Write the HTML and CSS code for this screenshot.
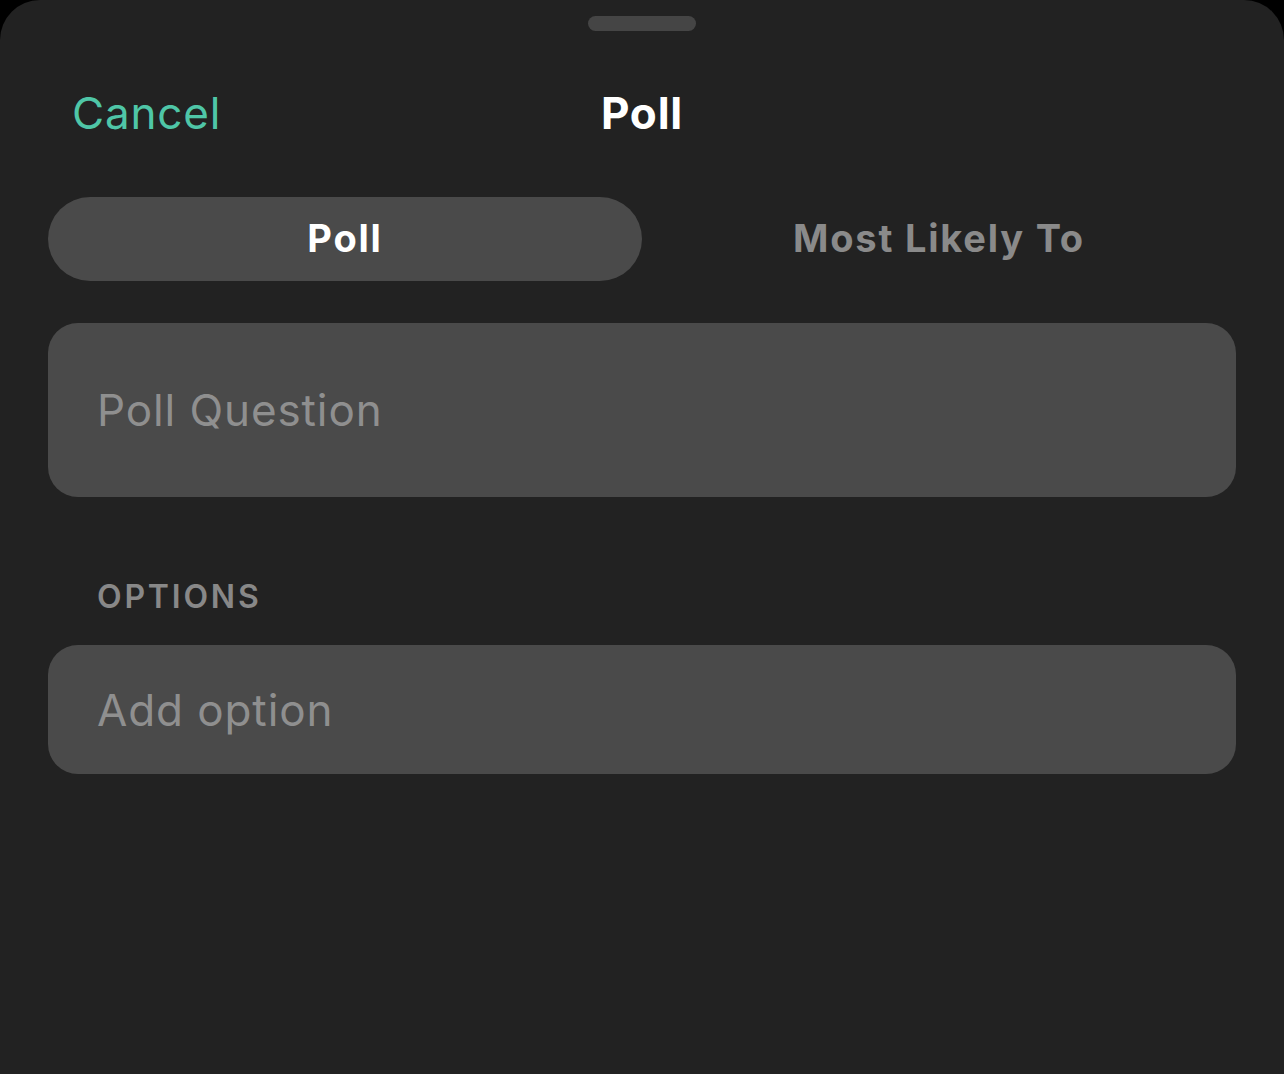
FILE: index.html
```html
<!DOCTYPE html>
<html>
<head>
<meta charset="utf-8">
<link rel="stylesheet" href="styles.css">
</head>
<body>
<div class="sheet">
  <div class="handle"></div>
  <div class="nav">
    <span class="cancel">Cancel</span>
    <span class="title">Poll</span>
  </div>
  <div class="segmented">
    <div class="seg active">Poll</div>
    <div class="seg">Most Likely To</div>
  </div>
  <div class="field question">Poll Question</div>
  <div class="section-label">OPTIONS</div>
  <div class="field option">Add option</div>
</div>
</body>
</html>
```
FILE: styles.css
```css
html, body {
  margin: 0;
  padding: 0;
  background: #000;
  width: 1284px;
  height: 1074px;
  overflow: hidden;
}
.sheet {
  box-sizing: border-box;
  width: 1284px;
  height: 1074px;
  background: #222222;
  border-radius: 40px 40px 0 0;
  padding: 16px 48px 0;
  font-family: Inter, "Noto Sans", sans-serif;
  display: flex;
  flex-direction: column;
}
.handle {
  align-self: center;
  width: 108px;
  height: 15px;
  border-radius: 8px;
  background: #454545;
}
.nav {
  position: relative;
  height: 54px;
  margin-top: 55px;
  display: flex;
  align-items: center;
  justify-content: center;
}
.cancel {
  position: absolute;
  left: 24px;
  top: 0;
  line-height: 54px;
  font-size: 44px;
  color: #4fc6a7;
  letter-spacing: 0.8px;
}
.title {
  font-size: 44px;
  font-weight: 700;
  color: #fff;
  line-height: 54px;
  letter-spacing: 0.8px;
}
.segmented {
  margin-top: 57px;
  display: flex;
  height: 84px;
}
.seg {
  flex: 1;
  display: flex;
  align-items: center;
  justify-content: center;
  font-size: 38px;
  font-weight: 700;
  color: #8a8a8a;
  border-radius: 42px;
  letter-spacing: 1.8px;
  padding-bottom: 2px;
}
.seg.active {
  background: #4a4a4a;
  color: #fff;
}
.field {
  background: #4a4a4a;
  border-radius: 30px;
  color: #8f8f8f;
  font-size: 44px;
  padding-left: 49px;
  display: flex;
  align-items: center;
  letter-spacing: 0.9px;
}
.question {
  margin-top: 42px;
  height: 174px;
}
.section-label {
  margin-top: 80px;
  padding-left: 49px;
  font-size: 32px;
  font-weight: 600;
  color: #888;
  letter-spacing: 2.8px;
  line-height: 40px;
}
.option {
  margin-top: 28px;
  height: 129px;
}
```
